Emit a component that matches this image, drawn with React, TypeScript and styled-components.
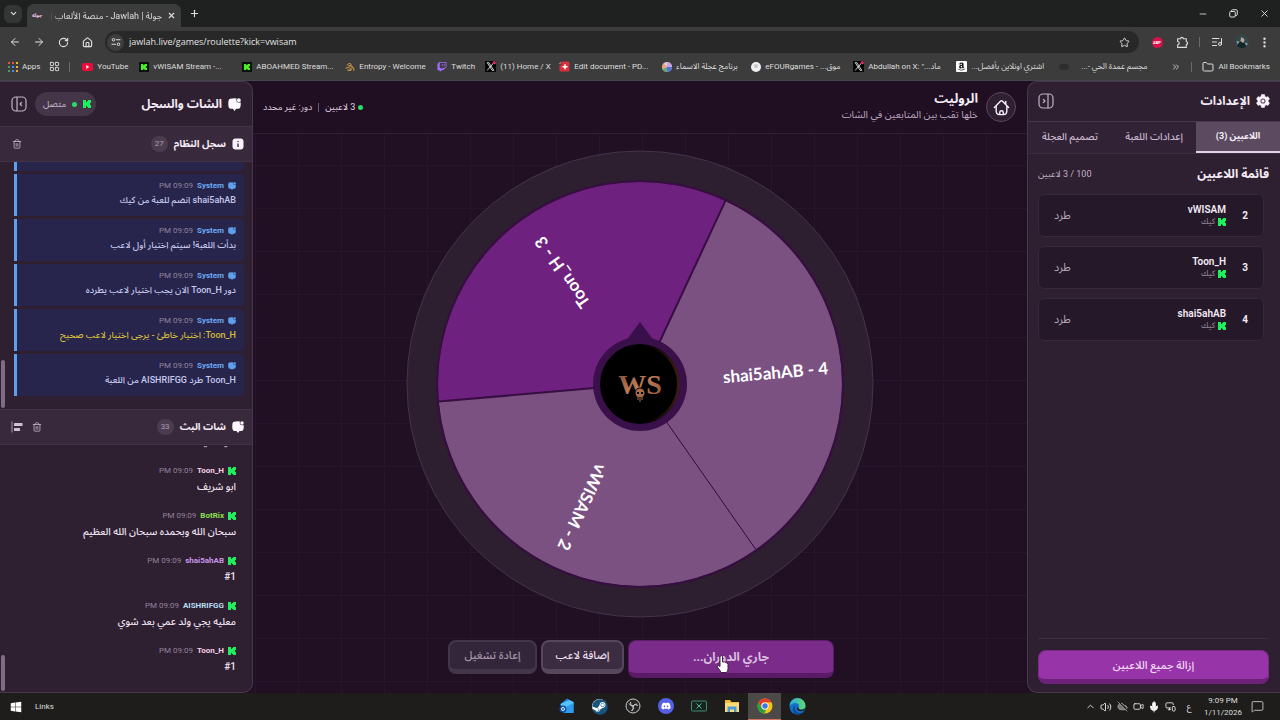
import React from "react";
import styled, { createGlobalStyle, css } from "styled-components";
import {
  ArrowLeft,
  ArrowRight,
  ChevronDown,
  ChevronUp,
  ChevronsRight,
  CloudOff,
  EllipsisVertical,
  Folder,
  House,
  LayoutGrid,
  ListMusic,
  MessageSquare,
  Mic,
  Minus,
  MonitorSmartphone,
  Plus,
  RotateCw,
  Star,
  Trash2,
  Video,
  Volume2,
  X as XIcon,
} from "lucide-react";
import { FaAmazon, FaDiscord, FaSteam, FaTwitch, FaWindows } from "react-icons/fa";

/* ---------- base ---------- */

const GlobalStyle = createGlobalStyle`
  *, *::before, *::after { box-sizing: border-box; }
  html, body { margin: 0; }
  body {
    background: #200f23;
    color: #f3ebf5;
    font-family: Roboto, "Noto Sans", "Noto Sans Arabic", "DejaVu Sans", sans-serif;
  }
  button { font: inherit; color: inherit; padding: 0; border: 0; background: none; cursor: pointer; }
  a { color: inherit; text-decoration: none; }
  ul, ol { list-style: none; margin: 0; padding: 0; }
  h1, h2, h3, p { margin: 0; }
  svg { display: block; flex: none; }
`;

const Screen = styled.div`
  display: flex;
  flex-direction: column;
  height: 100vh;
  overflow: hidden;
`;

/* ---------- browser chrome ---------- */

const Chrome = styled.header`
  flex: none;
  background: #3c3c3c;
  color: #dedede;
  border-bottom: 1px solid #47434a;
`;

const TabStrip = styled.div`
  display: flex;
  align-items: center;
  height: 27px;
  padding-left: 4px;
  background: #1f2120;
`;

const TabSearch = styled.button`
  display: grid;
  place-items: center;
  width: 18px;
  height: 18px;
  border-radius: 6px;
  background: #343635;
`;

const Tab = styled.div`
  display: flex;
  align-items: center;
  gap: 5px;
  align-self: flex-end;
  width: 154px;
  height: 23px;
  margin: 0 7px 0 5px;
  padding: 0 5px;
  border-radius: 7px 7px 0 0;
  background: #3c3c3c;
`;

const Favicon = styled.span`
  width: 12px;
  color: #f0c8e8;
  font-size: 5px;
  font-weight: 700;
  white-space: nowrap;
`;

const TabTitle = styled.span`
  flex: 1;
  min-width: 0;
  overflow: hidden;
  font-size: 9px;
  line-height: 16px;
  white-space: nowrap;
  mask-image: linear-gradient(to right, transparent, #000 12px);
`;

const WindowControls = styled.div`
  display: flex;
  margin-left: auto;
`;

const PlainButton = styled.button<{ $w: number }>`
  display: grid;
  place-items: center;
  width: ${(p) => p.$w}px;
  height: 22px;
`;

const Toolbar = styled.div`
  display: flex;
  align-items: center;
  height: 27px;
  padding: 3px 2px 0 3px;
`;

const AddressBar = styled.form`
  display: flex;
  align-items: center;
  flex: 1;
  height: 22px;
  margin: 0 6px;
  padding: 0 8px 0 2px;
  border-radius: 11px;
  background: #282828;
`;

const SiteInfo = styled.button`
  display: grid;
  place-items: center;
  width: 17px;
  height: 17px;
  border-radius: 50%;
  background: #3e3e3e;
`;

const Url = styled.input`
  flex: 1;
  min-width: 0;
  margin: 0 6px 0 5px;
  padding: 0;
  border: 0;
  outline: 0;
  background: none;
  color: #e2e2e2;
  font: 9px/16px "Open Sans", sans-serif;
`;

const VRule = styled.span<{ $before?: number }>`
  flex: none;
  width: 1px;
  height: 10px;
  margin-left: ${(p) => p.$before ?? 0}px;
  background: #6a6a6a;
`;

const AbpBadge = styled.span`
  display: grid;
  place-items: center;
  width: 11px;
  height: 11px;
  border-radius: 50%;
  background: #d3134a;
  color: #fff;
  font-size: 4px;
  font-weight: 700;
`;

const Bookmarks = styled.nav`
  display: flex;
  align-items: center;
  gap: 12px;
  height: 26px;
  padding: 0 10px 1px 8px;
`;

const BookmarksStart = styled.div`
  display: flex;
  align-items: center;
  flex: none;
  gap: 9px;
`;

const Bookmark = styled.a<{ $w?: number }>`
  display: flex;
  align-items: center;
  flex: none;
  gap: 4px;
  width: ${(p) => (p.$w ? `${p.$w}px` : "auto")};
  font-size: 8px;
  line-height: 14px;
  white-space: nowrap;
`;

const BookmarksEnd = styled.div`
  display: flex;
  align-items: center;
  gap: 10px;
  margin-left: auto;
`;

/* ---------- application shell ---------- */

const Shell = styled.div`
  display: grid;
  grid-template-columns: 253px minmax(0, 1fr) 253px;
  flex: 1;
  min-height: 0;
  background: #200f23;
`;

const panel = css`
  display: flex;
  flex-direction: column;
  min-height: 0;
  overflow: hidden;
  background: #2e1f31;
`;

const SettingsPanel = styled.aside`
  ${panel}
  border: 1px solid #49384d;
  border-width: 1px 0 1px 1px;
  border-radius: 10px 0 0 10px;
`;

const ChatPanel = styled.aside`
  ${panel}
  border: 1px solid #49384d;
  border-width: 1px 1px 1px 0;
  border-radius: 0 10px 10px 0;
`;

const PanelTitle = styled.h2`
  display: flex;
  align-items: center;
  gap: 6px;
  font-size: 12px;
  line-height: 18px;
  font-weight: 700;
`;

const IconButton = styled.button`
  display: grid;
  place-items: center;
  width: 16px;
  height: 16px;
  color: #c3b2c8;
`;

/* ---------- settings ---------- */

const SettingsHeader = styled.div`
  display: flex;
  align-items: center;
  justify-content: space-between;
  height: 40px;
  padding: 0 10px 1px;
  border-bottom: 1px solid #47374b;
`;

const Tabs = styled.div`
  display: grid;
  grid-template-columns: repeat(3, 1fr);
  height: 32px;
  border-bottom: 1px solid #3c2c40;
`;

const TabButton = styled.button<{ $active?: boolean }>`
  border-bottom: 2px solid ${(p) => (p.$active ? "#e6cfeb" : "transparent")};
  background: ${(p) => (p.$active ? "#5c4b60" : "#312235")};
  color: ${(p) => (p.$active ? "#f6eef8" : "#cbbad0")};
  font-size: ${(p) => (p.$active ? 9 : 10)}px;
  font-weight: ${(p) => (p.$active ? 700 : 500)};
  white-space: nowrap;
`;

const SettingsBody = styled.section`
  flex: 1;
  min-height: 0;
  padding: 10px 11px 0 10px;
`;

const ListHeading = styled.div`
  display: flex;
  align-items: center;
  justify-content: space-between;
  height: 20px;
  margin-bottom: 10px;
`;

const ListTitle = styled.h3`
  font-size: 12px;
  line-height: 18px;
  font-weight: 700;
`;

const ListCount = styled.span`
  color: #c3b2c8;
  font-size: 9px;
`;

const PlayerList = styled.ol`
  display: flex;
  flex-direction: column;
  gap: 9px;
  padding-right: 5px;
`;

const PlayerCard = styled.li`
  display: flex;
  align-items: center;
  height: 43px;
  padding: 0 15px;
  border: 1px solid #37283b;
  border-radius: 6px;
  background: #251929;
`;

const PlayerNumber = styled.span`
  width: 7px;
  font-size: 10px;
  font-weight: 700;
`;

const PlayerInfo = styled.div`
  display: flex;
  flex-direction: column;
  flex: 1;
  margin-right: 15px;
`;

const PlayerName = styled.strong`
  font-size: 10px;
  line-height: 13px;
  font-weight: 600;
`;

const Platform = styled.span`
  display: flex;
  align-items: center;
  gap: 3px;
  color: #9c8ca1;
  font-size: 8px;
  line-height: 12px;
`;

const KickButton = styled.button`
  color: #b8a8bd;
  font-size: 11px;
`;

const SettingsFooter = styled.footer`
  margin: 0 11px 0 10px;
  padding: 11px 0 8px;
  border-top: 1px solid #3d2d41;
`;

const RemoveAll = styled.button`
  display: block;
  width: 100%;
  height: 34px;
  border: 1px solid #7c2a8a;
  border-bottom: 5px solid #6d2179;
  border-radius: 8px;
  background: #9734a8;
  color: #f4dcf8;
  font-size: 11px;
  font-weight: 500;
`;

/* ---------- game stage ---------- */

const Stage = styled.main`
  display: flex;
  flex-direction: column;
  min-width: 0;
  min-height: 0;
  background-color: #210f24;
  background-image:
    linear-gradient(to right, #29142d 1px, transparent 1px),
    linear-gradient(to bottom, #29142d 1px, transparent 1px);
  background-size: 43px 43px;
  background-position: 2px -2px;
`;

const StageHeader = styled.header`
  display: flex;
  align-items: center;
  justify-content: space-between;
  height: 53px;
  padding: 0 11px 0 10px;
  border-bottom: 1px solid #322036;
  background: #200f23;
`;

const GameIdentity = styled.div`
  display: flex;
  align-items: center;
  gap: 8px;
`;

const HomeLink = styled.a`
  display: grid;
  place-items: center;
  width: 30px;
  height: 30px;
  border: 1px solid #59475e;
  border-radius: 50%;
  background: #2e1f31;
`;

const GameTitle = styled.h1`
  font-size: 13px;
  line-height: 16px;
  font-weight: 700;
`;

const GameSubtitle = styled.p`
  color: #b9a6be;
  font-size: 10px;
  line-height: 16px;
`;

const GameStatus = styled.div`
  display: flex;
  align-items: center;
  gap: 3px;
  color: #e3d6e6;
  font-size: 9px;
  line-height: 14px;
`;

const Dot = styled.span`
  width: 5px;
  height: 5px;
  border-radius: 50%;
  background: #28dc68;
`;

const StatusRule = styled.span`
  width: 1px;
  height: 9px;
  margin: 0 3px;
  background: #6a5870;
`;

const WheelArea = styled.div`
  display: flex;
  justify-content: center;
  flex: 1;
  min-height: 0;
  padding: 16px 0 22px;
`;

const WheelSvg = styled.svg`
  height: 100%;
  max-width: 100%;
  aspect-ratio: 1;
`;

const Controls = styled.div`
  display: flex;
  align-items: flex-start;
  justify-content: center;
  gap: 4px;
  padding: 0 0 15px 2px;
`;

const SpinButton = styled.button`
  position: relative;
  width: 206px;
  height: 38px;
  border: 1px solid #5d1c69;
  border-bottom: 5px solid #5a1a66;
  border-radius: 8px;
  background: #7b2b89;
  color: #d9bfe0;
  font-size: 12px;
  font-weight: 700;
`;

const Pointer = styled.svg`
  position: absolute;
  top: 14px;
  left: 87px;
`;

const GhostButton = styled.button<{ $w: number; $muted?: boolean }>`
  width: ${(p) => p.$w}px;
  height: 34px;
  border: 2px solid ${(p) => (p.$muted ? "#43364a" : "#57475c")};
  border-bottom-width: 5px;
  border-radius: 8px;
  background: ${(p) => (p.$muted ? "#33263a" : "#3c2c41")};
  color: ${(p) => (p.$muted ? "#a797ac" : "#eadfed")};
  font-size: 11px;
  font-weight: 500;
`;

/* ---------- chat ---------- */

const ChatHeader = styled.div`
  display: flex;
  align-items: center;
  justify-content: space-between;
  height: 44px;
  padding: 0 11px;
`;

const HeaderGroup = styled.div<{ $gap: number }>`
  display: flex;
  align-items: center;
  gap: ${(p) => p.$gap}px;
`;

const Connection = styled.span`
  display: flex;
  align-items: center;
  gap: 6px;
  height: 24px;
  padding: 0 5px 0 8px;
  border-radius: 12px;
  background: #453549;
  color: #c9bacd;
  font-size: 9px;
`;

const FeedHeader = styled.div`
  display: flex;
  align-items: center;
  justify-content: space-between;
  flex: none;
  height: 36px;
  padding: 0 8px 0 9px;
  border: 1px solid #423246;
  border-width: 1px 0;
  background: #39293d;
`;

const FeedTitle = styled.h3`
  display: flex;
  align-items: center;
  gap: 6px;
  font-size: 10px;
  line-height: 16px;
  font-weight: 700;
`;

const CountBadge = styled.span`
  display: grid;
  place-items: center;
  width: 17px;
  height: 16px;
  border-radius: 8px;
  background: #4c3c50;
  color: #ac9cb1;
  font-size: 8px;
  font-weight: 400;
`;

const Feed = styled.div`
  position: relative;
  display: flex;
  flex-direction: column;
  justify-content: flex-end;
  flex: 1;
  min-height: 0;
  overflow: hidden;
  padding: 0 8px 13px 14px;
`;

const ScrollThumb = styled.span<{ $h: number }>`
  position: absolute;
  left: 1px;
  bottom: 1px;
  width: 4px;
  height: ${(p) => p.$h}px;
  border-radius: 2px;
  background: #806c86;
`;

const FeedList = styled.ul`
  display: flex;
  flex-direction: column;
  gap: 3px;
`;

const Message = styled.li<{ $system?: boolean }>`
  display: flex;
  flex-direction: column;
  gap: ${(p) => (p.$system ? 0 : 2)}px;
  height: 42px;
  padding: ${(p) => (p.$system ? 5 : 7)}px 8px 0;
  border-left: 3px solid ${(p) => (p.$system ? "#5fa0ee" : "transparent")};
  border-radius: 0 4px 4px 0;
  background: ${(p) => (p.$system ? "#27254c" : "none")};
  color: ${(p) => (p.$system ? "#c6c9ee" : "#efe4f2")};
  font-size: ${(p) => (p.$system ? 9 : 10)}px;
`;

const MessageMeta = styled.div`
  display: flex;
  align-items: center;
  gap: 4px;
  font-size: 8px;
  line-height: 13px;
`;

const Author = styled.strong<{ $color: string }>`
  color: ${(p) => p.$color};
  font-weight: 700;
`;

const Time = styled.time`
  color: #93849c;
`;

const MessageText = styled.p<{ $warn?: boolean }>`
  color: ${(p) => (p.$warn ? "#d8bd3a" : "inherit")};
  line-height: 16px;
  font-weight: 500;
  white-space: nowrap;
`;

/* ---------- taskbar ---------- */

const Taskbar = styled.footer`
  display: flex;
  align-items: stretch;
  flex: none;
  height: 27px;
  background: #1e1d1b;
  color: #dddddd;
  font-size: 9px;
`;

const TaskbarStart = styled.div`
  display: flex;
  align-items: center;
  gap: 11px;
  flex: 0 0 43%;
  padding-left: 8px;
`;

const TaskbarLabel = styled.span`
  font-size: 8px;
`;

const TaskbarApps = styled.div`
  display: flex;
`;

const TaskbarApp = styled.button<{ $active?: boolean }>`
  display: grid;
  place-items: center;
  width: 33px;
  border-bottom: 1px solid ${(p) => (p.$active ? "#d9705a" : "transparent")};
  background: ${(p) => (p.$active ? "#4b4a48" : "none")};
`;

const DiscordDisc = styled.span`
  display: grid;
  place-items: center;
  width: 16px;
  height: 16px;
  border-radius: 50%;
  background: #5560e6;
`;

const Tray = styled.div`
  display: flex;
  align-items: center;
  margin-left: auto;
  padding-right: 16px;
`;

const TrayIcon = styled.button`
  display: grid;
  place-items: center;
  width: 16px;
  height: 16px;
`;

const Clock = styled.time`
  width: 46px;
  margin-right: 5px;
  font-size: 8px;
  line-height: 12px;
  text-align: center;
`;

/* ---------- icons ---------- */

const KickLogo = ({ size = 8, color = "#1df05c" }: { size?: number; color?: string }) => (
  <svg width={size} height={size} viewBox="0 0 9 9" fill={color} shapeRendering="crispEdges" aria-hidden="true">
    <path d="M0 0h3.400v2h1V1h1V0H9v3H8v1H7v1h1v1h1v3H5.400V8h-1V7h-1v2H0z" />
  </svg>
);

const KickTile = () => (
  <svg width="10" height="10" viewBox="0 0 15 15" aria-hidden="true">
    <rect width="15" height="15" fill="#06120a" />
    <path d="M3 3h3.400v2h1V4h1V3H12v3h-1v1h-1v1h1v1h1v3H8.400v-1h-1v-1h-1v2H3z" fill="#4ff02a" />
  </svg>
);

const ChatIcon = ({ size, color = "#fdf8fe", cut }: { size: number; color?: string; cut: string }) => (
  <svg width={size} height={size} viewBox="0 0 24 24" aria-hidden="true">
    <path
      d="M4 1.500Q12-.5 20 1.500 22.500 2 23 5q1 6 0 11-.8 3.500-4 4h-4L12 24l-3-4H5q-3.500-.5-4-4Q0 10 1 5q.5-3 3-3.500z"
      fill={color}
    />
    <circle cx="20.500" cy="3.500" r="5" fill={cut} />
    <circle cx="20" cy="4" r="3.500" fill={color} />
  </svg>
);

const InfoIcon = () => (
  <svg width="12" height="12" viewBox="0 0 24 24" aria-hidden="true">
    <rect x="1" y="1" width="22" height="22" rx="6" fill="#f8f2fa" />
    <path d="M12 11v7M12 6v2" stroke="#4b3a50" strokeWidth="3" />
  </svg>
);

const GearIcon = () => (
  <svg width="14" height="14" viewBox="0 0 24 24" aria-hidden="true">
    <path
      d="M9.500 1h5l.8 3.400 2 1.100 3.300-1 2.500 4.300-2.500 2.400v1.600l2.500 2.400-2.500 4.300-3.300-1-2 1.100-.8 3.400h-5l-.8-3.400-2-1.100-3.300 1L.9 15.200l2.500-2.400v-1.600L.9 8.800l2.500-4.300 3.300 1 2-1.100z"
      fill="#fbf4fd"
      stroke="#fbf4fd"
      strokeLinejoin="round"
    />
    <circle cx="12" cy="12" r="3.500" fill="none" stroke="#5a4860" strokeWidth="1.800" />
  </svg>
);

const PanelToggle = ({ flip }: { flip?: boolean }) => (
  <svg width="16" height="16" viewBox="0 0 24 24" fill="none" stroke="currentColor" strokeWidth="1.800" strokeLinecap="round" strokeLinejoin="round" aria-hidden="true">
    <rect x="1.500" y="1.500" width="21" height="21" rx="6" />
    {flip ? <path d="M15 2v20M8 9.500l2.500 2.500L8 14.500" /> : <path d="M9 2v20M16 9.500 13.500 12l2.500 2.500" />}
  </svg>
);

const HomeGlyph = () => (
  <svg width="17" height="17" viewBox="0 0 24 24" fill="none" stroke="#f6eef8" strokeWidth="2" strokeLinecap="round" strokeLinejoin="round" aria-hidden="true">
    <path d="M2 12 10.500 3.200q1.500-1.400 3 0L22 12M4.500 10v7q0 5 5 5h5q5 0 5-5v-7M18 7V3.500M9.500 22v-3q0-2.500 2.500-2.500t2.500 2.500v3" />
  </svg>
);

const AlignIcon = () => (
  <svg width="12" height="12" viewBox="0 0 24 24" aria-hidden="true">
    <path d="M2 1v22" stroke="#a796ac" strokeWidth="2" />
    <rect x="6" y="4" width="17" height="6" rx="1" fill="#cfc0d3" />
    <rect x="6" y="14" width="12" height="6" rx="1" fill="#cfc0d3" />
  </svg>
);

const RestoreIcon = () => (
  <svg width="9" height="9" viewBox="0 0 18 18" fill="none" stroke="currentColor" strokeWidth="2" aria-hidden="true">
    <rect x="1.500" y="5" width="11" height="11" rx="2" />
    <path d="M5 5V3.500q0-2 2-2h7.500q2 0 2 2V11q0 2-2 2H12.500" />
  </svg>
);

const SiteInfoIcon = () => (
  <svg width="10" height="10" viewBox="0 0 20 20" fill="none" stroke="currentColor" strokeWidth="2" aria-hidden="true">
    <circle cx="5" cy="5.500" r="2.500" />
    <path d="M10 5.500h9M1 14.500h9" />
    <circle cx="15" cy="14.500" r="2.500" />
  </svg>
);

const ExtensionIcon = () => (
  <svg width="13" height="13" viewBox="0 0 24 24" fill="none" stroke="currentColor" strokeWidth="2" strokeLinejoin="round" aria-hidden="true">
    <path d="M3 5h5.500a2.500 2.500 0 0 1 5 0H19v5.500a2.500 2.500 0 0 1 0 5V21H3v-5a3 3 0 0 0 0-6z" />
  </svg>
);

const AppsIcon = () => (
  <svg width="10" height="10" viewBox="0 0 10 10" aria-hidden="true">
    {["#e5533c", "#e5533c", "#f0b429", "#3fa35c", "#4b8bf4", "#f0b429", "#3fa35c", "#4b8bf4", "#e8a33c"].map((c, i) => (
      <rect key={i} x={(i % 3) * 4} y={Math.floor(i / 3) * 4} width="2" height="2" fill={c} />
    ))}
  </svg>
);

const YouTubeIcon = () => (
  <svg width="11" height="10" viewBox="0 0 22 20" aria-hidden="true">
    <rect y="2" width="22" height="16" rx="4" fill="#f4083a" />
    <path d="M8.500 6v8l6-4z" fill="#fff" />
  </svg>
);

const EntropyIcon = () => (
  <svg width="10" height="10" viewBox="0 0 20 20" fill="none" stroke="#c99a45" strokeWidth="2" strokeLinecap="round" aria-hidden="true">
    <path d="M4 6q5-6 8-2t-5 4q8-1 7 5t-9 3M2 12q6-3 9 1t-4 4M14 8q5 3 4 9" />
  </svg>
);

const XTile = () => (
  <svg width="11" height="11" viewBox="0 0 20 20" aria-hidden="true">
    <rect width="20" height="20" fill="#050505" />
    <path d="M4 3h3l9 14h-3zM16 3 4 17" fill="none" stroke="#e6e6e6" strokeWidth="1.600" />
    <circle cx="17" cy="3" r="3" fill="#e0245e" />
  </svg>
);

const EditDocIcon = () => (
  <svg width="11" height="11" viewBox="0 0 22 22" aria-hidden="true">
    <path d="M5 1h13q3 0 3 3v14q0 3-3 3H4q-3 0-3-3V8h4z" fill="#d92f3f" />
    <path d="M12 6.500v10M7 11.500h10" stroke="#fff" strokeWidth="3" />
    <path d="M0 5h3V2" stroke="#e88" strokeWidth="1.500" fill="none" />
  </svg>
);

const NameWheelIcon = () => (
  <svg width="10" height="10" viewBox="0 0 20 20" aria-hidden="true">
    <circle cx="10" cy="10" r="10" fill="#e9c6d0" />
    <path d="M10 10V0a10 10 0 0 1 10 10z" fill="#c9a3e6" />
    <path d="M10 10h10a10 10 0 0 1-10 10z" fill="#5570d8" />
    <path d="M10 10v10A10 10 0 0 1 1 14z" fill="#5fae6a" />
    <path d="M10 10 1 14A10 10 0 0 1 3 3z" fill="#e2a07a" />
  </svg>
);

const BallIcon = () => (
  <svg width="10" height="10" viewBox="0 0 20 20" aria-hidden="true">
    <circle cx="10" cy="10" r="10" fill="#f1f1f1" />
    <path d="M5 7q5-3 10 0M6 10h8M10 6v6" stroke="#aaa" strokeWidth="1.500" fill="none" />
  </svg>
);

const AmazonTile = styled.span`
  display: grid;
  place-items: center;
  width: 11px;
  height: 11px;
  border-radius: 1px;
  background: #fff;
  color: #151515;
`;

const FaintTile = styled.span`
  width: 10px;
  height: 6px;
  margin-right: 8px;
  border-radius: 3px;
  background: #302d2d;
`;

const Avatar = () => (
  <svg width="14" height="14" viewBox="0 0 28 28" aria-hidden="true">
    <circle cx="14" cy="14" r="14" fill="#32474c" />
    <path d="M4 22q6-10 10-8t10 8a14 14 0 0 1-20 0z" fill="#162327" />
    <path d="M12 5q6-1 7 6l-3 5-5-4z" fill="#b7a596" />
    <path d="M3 12l6 1-4 6zM20 15l6 2-4 5z" fill="#7fa0a4" />
  </svg>
);

const StoreIcon = () => (
  <svg width="16" height="16" viewBox="0 0 32 32" aria-hidden="true">
    <path d="M3 12 16 1l13 7v22H9z" fill="#1f7fe0" />
    <path d="M3 12 20 4l9 4v6L6 24z" fill="#55c3f7" />
    <path d="M12 19l17-9v20H12z" fill="#2f9bee" />
    <circle cx="8" cy="22" r="7" fill="#0d4fa8" />
    <circle cx="8" cy="22" r="3" fill="none" stroke="#e8f5ff" strokeWidth="2" />
  </svg>
);

const SteamDisc = styled.span`
  display: grid;
  place-items: center;
  width: 15px;
  height: 15px;
  border-radius: 50%;
  background: #fff;
`;

const ObsIcon = () => (
  <svg width="16" height="16" viewBox="0 0 32 32" fill="none" stroke="#c8c8c8" strokeWidth="2" aria-hidden="true">
    <circle cx="16" cy="16" r="14" fill="#262626" />
    <path d="M16 16q-6-1-5-8M16 16q4-5 10-1M16 16q3 6-3 10M8 11q3 6 8 5M24 12q-6 0-8 4M13 26q5-3 3-10" />
  </svg>
);

const TerminalIcon = () => (
  <svg width="16" height="16" viewBox="0 0 32 32" fill="none" stroke="#3f8a76" strokeWidth="2" aria-hidden="true">
    <rect x="1" y="6" width="30" height="20" rx="2" fill="#18241f" />
    <path d="M11 11l10 10M21 11 11 21" stroke="#58b397" />
  </svg>
);

const ExplorerIcon = () => (
  <svg width="16" height="16" viewBox="0 0 32 32" aria-hidden="true">
    <path d="M2 4h10l3 4h15v20H2z" fill="#f0b93a" />
    <path d="M2 10h28v18H2z" fill="#fbdc78" />
    <path d="M7 17h18v11h-5v-5h-8v5H7z" fill="#4a9bd4" />
  </svg>
);

const ChromeIcon = () => (
  <svg width="16" height="16" viewBox="0 0 32 32" aria-hidden="true">
    <circle cx="16" cy="16" r="15" fill="#fbc116" />
    <path d="M3 8.500A15 15 0 0 1 29 8.500H16a7.500 7.500 0 0 0-6.500 11.200z" fill="#e33b2e" />
    <path d="M3 8.500 9.500 19.700A7.500 7.500 0 0 0 18 23.200L15 31A15 15 0 0 1 3 8.500z" fill="#24a148" />
    <circle cx="16" cy="16" r="7" fill="#fff" />
    <circle cx="16" cy="16" r="5.500" fill="#3b78e7" />
  </svg>
);

const EdgeIcon = () => (
  <svg width="17" height="17" viewBox="0 0 32 32" aria-hidden="true">
    <defs>
      <linearGradient id="edgeTop" x1="0" x2="1">
        <stop offset="0" stopColor="#2aa7e8" />
        <stop offset="1" stopColor="#5fdc6c" />
      </linearGradient>
    </defs>
    <circle cx="16" cy="16" r="15" fill="#1272c4" />
    <path d="M1 15A15 15 0 0 1 31 15q0 7-8 7-6 0-5-4 3-5-3-8-8-2-14 5z" fill="url(#edgeTop)" />
    <path d="M12 14q-3 8 4 13 6 3 12-2-6 7-14 6-8-3-7-11 1-5 5-6z" fill="#0c4c9a" />
    <path d="M18 18q-1 4 5 4 4 0 7-3-2 6-7 6-8 0-8-6 0-3 3-1z" fill="#1e1d1b" />
  </svg>
);

/* ---------- wheel ---------- */

const CENTER = 234;
const RADIUS = 202;

const polar = (deg: number, r: number) => {
  const a = (deg * Math.PI) / 180;
  return `${(CENTER + r * Math.cos(a)).toFixed(2)} ${(CENTER + r * Math.sin(a)).toFixed(2)}`;
};

const segments = [
  { label: "shai5ahAB - 4", from: -65, fill: "#7b5182" },
  { label: "vWISAM - 2", from: 55, fill: "#7b5182" },
  { label: "Toon_H - 3", from: 175, fill: "#6f2180" },
];

const Wheel = () => (
  <WheelSvg viewBox="0 0 468 468" direction="ltr" role="img" aria-label="عجلة الروليت">
    <defs>
      <linearGradient id="hubText" x1="0" y1="0" x2="1" y2="1">
        <stop offset="0" stopColor="#7c4a34" />
        <stop offset="0.500" stopColor="#c07c56" />
        <stop offset="1" stopColor="#8a4f33" />
      </linearGradient>
      <linearGradient id="hubRim" x1="0" x2="1">
        <stop offset="0.600" stopColor="#000" />
        <stop offset="1" stopColor="#3d1d12" />
      </linearGradient>
    </defs>
    <circle cx={CENTER} cy={CENTER} r="233" fill="#2d1f30" stroke="#44344a" />
    {segments.map((s) => (
      <path
        key={s.label}
        d={`M${CENTER} ${CENTER}L${polar(s.from, RADIUS)}A${RADIUS} ${RADIUS} 0 0 1 ${polar(s.from + 120, RADIUS)}z`}
        fill={s.fill}
      />
    ))}
    <g stroke="#380d42">
      <path d={`M${CENTER} ${CENTER}L${polar(55, RADIUS)}`} strokeWidth="1" />
      <path d={`M${polar(-65, RADIUS)}L${CENTER} ${CENTER}L${polar(175, RADIUS)}`} strokeWidth="2" fill="none" />
      <circle cx={CENTER} cy={CENTER} r={RADIUS + 1} strokeWidth="2" fill="none" />
    </g>
    {segments.map((s) => (
      <text
        key={s.label}
        x={CENTER + 136}
        y={CENTER}
        transform={`rotate(${s.from + 60} ${CENTER} ${CENTER})`}
        textAnchor="middle"
        dominantBaseline="central"
        fill="#fff"
        fontFamily="Lato, sans-serif"
        fontSize="17"
        fontWeight="700"
      >
        {s.label}
      </text>
    ))}
    <path d="M234 172l11 15q4 4 12 7h-46q8-3 12-7z" fill="#3a104a" />
    <circle cx={CENTER} cy={CENTER} r="47" fill="#3a104a" />
    <circle cx={CENTER} cy={CENTER} r="40" fill="url(#hubRim)" />
    <circle cx={CENTER - 1} cy={CENTER} r="38" fill="#000" />
    <text x={CENTER} y={CENTER + 10} textAnchor="middle" fill="url(#hubText)" fontFamily="Liberation Serif, serif" fontSize="28" fontWeight="700">
      WS
    </text>
    <circle cx={CENTER} cy={CENTER + 9} r="5" fill="#a86a4a" stroke="#000" />
    <path d="M232 247v3M234 248v4M236 247v3" stroke="#a86a4a" />
    <path d="M231 243h2M235 243h2" stroke="#000" strokeWidth="2" />
  </WheelSvg>
);

/* ---------- data ---------- */

const players = [
  { number: 2, name: "vWISAM" },
  { number: 3, name: "Toon_H" },
  { number: 4, name: "shai5ahAB" },
];

const systemLog = [
  { text: "AISHRIFGG انضم للعبة من كيك" },
  { text: "shai5ahAB انضم للعبة من كيك" },
  { text: "بدأت اللعبة! سيتم اختيار أول لاعب" },
  { text: "دور Toon_H الان يجب اختيار لاعب يطرده" },
  { text: "Toon_H: اختيار خاطئ - يرجى اختيار لاعب صحيح", warn: true },
  { text: "Toon_H طرد AISHRIFGG من اللعبة" },
];

const chat = [
  { author: "AISHRIFGG", color: "#b9dcf2", text: "عليك فيه" },
  { author: "Toon_H", color: "#f6cfe6", text: "ابو شريف" },
  { author: "BotRix", color: "#8be04e", text: "سبحان الله وبحمده سبحان الله العظيم" },
  { author: "shai5ahAB", color: "#c995ea", text: "#1", ltr: true },
  { author: "AISHRIFGG", color: "#b9dcf2", text: "معليه يجي ولد عمي بعد شوي" },
  { author: "Toon_H", color: "#f6cfe6", text: "#1", ltr: true },
];

const bookmarks: { label: string; width: number; icon: React.ReactNode; rtl?: boolean }[] = [
  { label: "YouTube", width: 45, icon: <YouTubeIcon /> },
  { label: "vWISAM Stream -...", width: 91, icon: <KickTile /> },
  { label: "ABOAHMED Stream...", width: 91, icon: <KickTile /> },
  { label: "Entropy - Welcome", width: 80, icon: <EntropyIcon /> },
  { label: "Twitch", width: 36, icon: <FaTwitch size={10} color="#a56bff" /> },
  { label: "(11) Home / X", width: 62, icon: <XTile /> },
  { label: "Edit document - PD...", width: 91, icon: <EditDocIcon /> },
  { label: "برنامج عجلة الاسماء", width: 77, icon: <NameWheelIcon />, rtl: true },
  { label: "eFOURgames - موق...\u200f", width: 90, icon: <BallIcon /> },
  { label: "Abdullah on X: \"ماد...\u200f", width: 91, icon: <XTile /> },
  { label: "اشتري اونلاين بأفضل...", width: 91, icon: <AmazonTile><FaAmazon size={9} /></AmazonTile>, rtl: true },
  { label: "مجسم عمدة الحي -...", width: 91, icon: <FaintTile />, rtl: true },
];

/* ---------- sections ---------- */

const BrowserChrome = () => (
  <Chrome dir="ltr">
    <TabStrip>
      <TabSearch aria-label="Search tabs"><ChevronDown size={9} strokeWidth={3} /></TabSearch>
      <Tab>
        <Favicon>جوله</Favicon>
        <TabTitle dir="rtl">جولة | Jawlah - منصة الألعاب التفاعلية</TabTitle>
        <PlainButton $w={9} aria-label="Close tab"><XIcon size={9} strokeWidth={3} /></PlainButton>
      </Tab>
      <PlainButton $w={12} aria-label="New tab"><Plus size={11} strokeWidth={2.5} /></PlainButton>
      <WindowControls>
        <PlainButton $w={31} aria-label="Minimize"><Minus size={10} /></PlainButton>
        <PlainButton $w={31} aria-label="Restore"><RestoreIcon /></PlainButton>
        <PlainButton $w={31} aria-label="Close"><XIcon size={11} strokeWidth={2} /></PlainButton>
      </WindowControls>
    </TabStrip>
    <Toolbar>
      <PlainButton $w={24} aria-label="Back"><ArrowLeft size={12} /></PlainButton>
      <PlainButton $w={24} aria-label="Forward"><ArrowRight size={12} /></PlainButton>
      <PlainButton $w={24} aria-label="Reload"><RotateCw size={11} strokeWidth={2.5} /></PlainButton>
      <PlainButton $w={24} aria-label="Home"><House size={11} strokeWidth={2.5} /></PlainButton>
      <AddressBar>
        <SiteInfo type="button" aria-label="Site information"><SiteInfoIcon /></SiteInfo>
        <Url aria-label="Address" defaultValue="jawlah.live/games/roulette?kick=vwisam" />
        <PlainButton type="button" $w={14} aria-label="Bookmark this page"><Star size={11} /></PlainButton>
      </AddressBar>
      <PlainButton $w={24} aria-label="Adblock Plus"><AbpBadge>ABP</AbpBadge></PlainButton>
      <PlainButton $w={26} aria-label="Extensions"><ExtensionIcon /></PlainButton>
      <VRule $before={4} />
      <PlainButton $w={34} aria-label="Media"><ListMusic size={12} /></PlainButton>
      <PlainButton $w={16} aria-label="Profile"><Avatar /></PlainButton>
      <PlainButton $w={28} aria-label="Menu"><EllipsisVertical size={13} strokeWidth={2.5} /></PlainButton>
    </Toolbar>
    <Bookmarks>
      <BookmarksStart>
        <Bookmark href="#apps"><AppsIcon />Apps</Bookmark>
        <LayoutGrid size={11} />
        <VRule />
      </BookmarksStart>
      {bookmarks.map((b) => (
        <Bookmark key={b.label} href="#bookmark" $w={b.width}>
          {b.icon}
          <span dir={b.rtl ? "rtl" : "ltr"}>{b.label}</span>
        </Bookmark>
      ))}
      <BookmarksEnd>
        <ChevronsRight size={10} />
        <VRule />
        <Bookmark href="#all"><Folder size={12} />All Bookmarks</Bookmark>
      </BookmarksEnd>
    </Bookmarks>
  </Chrome>
);

const Settings = () => (
  <SettingsPanel>
    <SettingsHeader>
      <PanelTitle><GearIcon />الإعدادات</PanelTitle>
      <IconButton aria-label="إخفاء الإعدادات"><PanelToggle flip /></IconButton>
    </SettingsHeader>
    <Tabs role="tablist">
      <TabButton role="tab" aria-selected $active>اللاعبين (3)</TabButton>
      <TabButton role="tab">إعدادات اللعبة</TabButton>
      <TabButton role="tab">تصميم العجلة</TabButton>
    </Tabs>
    <SettingsBody>
      <ListHeading>
        <ListTitle>قائمة اللاعبين</ListTitle>
        <ListCount>100 / 3 لاعبين</ListCount>
      </ListHeading>
      <PlayerList>
        {players.map((p) => (
          <PlayerCard key={p.number}>
            <PlayerNumber>{p.number}</PlayerNumber>
            <PlayerInfo>
              <PlayerName>{p.name}</PlayerName>
              <Platform><KickLogo />كيك</Platform>
            </PlayerInfo>
            <KickButton>طرد</KickButton>
          </PlayerCard>
        ))}
      </PlayerList>
    </SettingsBody>
    <SettingsFooter>
      <RemoveAll>إزالة جميع اللاعبين</RemoveAll>
    </SettingsFooter>
  </SettingsPanel>
);

const Game = () => (
  <Stage>
    <StageHeader>
      <GameIdentity>
        <HomeLink href="#home" aria-label="الرئيسية"><HomeGlyph /></HomeLink>
        <div>
          <GameTitle>الروليت</GameTitle>
          <GameSubtitle>خلها تقب بين المتابعين في الشات</GameSubtitle>
        </div>
      </GameIdentity>
      <GameStatus>
        <Dot />
        <span>3 لاعبين</span>
        <StatusRule />
        <span>دور: غير محدد</span>
      </GameStatus>
    </StageHeader>
    <WheelArea><Wheel /></WheelArea>
    <Controls>
      <SpinButton>
        جاري الدوران...
        <Pointer width="13" height="18" viewBox="0 0 26 36" aria-hidden="true">
          <path
            d="M8 20V4q0-3 2.500-3T13 4v10q5-1 6 1 5 0 5 4v8q0 4-3 8H10q-2-5-6-9l-2-4q2-3 6 1z"
            fill="#fff"
            stroke="#3a2540"
            strokeWidth="2"
          />
        </Pointer>
      </SpinButton>
      <GhostButton $w={83}>إضافة لاعب</GhostButton>
      <GhostButton $w={89} $muted>إعادة تشغيل</GhostButton>
    </Controls>
  </Stage>
);

const Chat = () => (
  <ChatPanel>
    <ChatHeader>
      <PanelTitle><ChatIcon size={13} cut="#2e1f31" />الشات والسجل</PanelTitle>
      <HeaderGroup $gap={8}>
        <Connection><KickLogo size={8} /><Dot />متصل</Connection>
        <IconButton aria-label="إخفاء الشات"><PanelToggle /></IconButton>
      </HeaderGroup>
    </ChatHeader>
    <FeedHeader>
      <FeedTitle><InfoIcon />سجل النظام<CountBadge>27</CountBadge></FeedTitle>
      <IconButton aria-label="مسح السجل"><Trash2 size={10} /></IconButton>
    </FeedHeader>
    <Feed>
      <FeedList>
        {systemLog.map((m) => (
          <Message key={m.text} $system>
            <MessageMeta>
              <ChatIcon size={8} color="#5fa0ee" cut="#27254c" />
              <Author $color="#6cabf5">System</Author>
              <Time>09:09 PM</Time>
            </MessageMeta>
            <MessageText $warn={m.warn}>{m.text}</MessageText>
          </Message>
        ))}
      </FeedList>
      <ScrollThumb $h={48} />
    </Feed>
    <FeedHeader>
      <FeedTitle><ChatIcon size={12} cut="#39293d" />شات البث<CountBadge>33</CountBadge></FeedTitle>
      <HeaderGroup $gap={4}>
        <IconButton aria-label="مسح الشات"><Trash2 size={10} /></IconButton>
        <IconButton aria-label="محاذاة"><AlignIcon /></IconButton>
      </HeaderGroup>
    </FeedHeader>
    <Feed>
      <FeedList>
        {chat.map((m, i) => (
          <Message key={i}>
            <MessageMeta>
              <KickLogo size={8} />
              <Author $color={m.color}>{m.author}</Author>
              <Time>09:09 PM</Time>
            </MessageMeta>
            <MessageText>{m.ltr ? <bdi dir="ltr">{m.text}</bdi> : m.text}</MessageText>
          </Message>
        ))}
      </FeedList>
      <ScrollThumb $h={36} />
    </Feed>
  </ChatPanel>
);

const Desktop = () => (
  <Taskbar dir="ltr">
    <TaskbarStart>
      <TrayIcon aria-label="Start"><FaWindows size={12} color="#fff" /></TrayIcon>
      <TaskbarLabel>Links</TaskbarLabel>
    </TaskbarStart>
    <TaskbarApps>
      <TaskbarApp aria-label="Store"><StoreIcon /></TaskbarApp>
      <TaskbarApp aria-label="Steam"><SteamDisc><FaSteam size={16} color="#15547f" /></SteamDisc></TaskbarApp>
      <TaskbarApp aria-label="OBS"><ObsIcon /></TaskbarApp>
      <TaskbarApp aria-label="Discord"><DiscordDisc><FaDiscord size={10} color="#fff" /></DiscordDisc></TaskbarApp>
      <TaskbarApp aria-label="Console"><TerminalIcon /></TaskbarApp>
      <TaskbarApp aria-label="Files"><ExplorerIcon /></TaskbarApp>
      <TaskbarApp aria-label="Chrome" $active><ChromeIcon /></TaskbarApp>
      <TaskbarApp aria-label="Edge"><EdgeIcon /></TaskbarApp>
    </TaskbarApps>
    <Tray>
      <TrayIcon aria-label="Hidden icons"><ChevronUp size={11} /></TrayIcon>
      <TrayIcon aria-label="Volume"><Volume2 size={12} /></TrayIcon>
      <TrayIcon aria-label="Cloud"><CloudOff size={11} color="#9a9a9a" fill="#777" /></TrayIcon>
      <TrayIcon aria-label="Camera"><Video size={11} /></TrayIcon>
      <TrayIcon aria-label="Microphone"><Mic size={12} fill="#fff" /></TrayIcon>
      <TrayIcon aria-label="Network"><MonitorSmartphone size={11} /></TrayIcon>
      <PlainButton $w={22} aria-label="Language">ع</PlainButton>
      <Clock>9:09 PM<br />1/11/2026</Clock>
      <MessageSquare size={13} strokeWidth={1.5} />
    </Tray>
  </Taskbar>
);

export default function App() {
  return (
    <Screen>
      <GlobalStyle />
      <BrowserChrome />
      <Shell dir="rtl">
        <Settings />
        <Game />
        <Chat />
      </Shell>
      <Desktop />
    </Screen>
  );
}
